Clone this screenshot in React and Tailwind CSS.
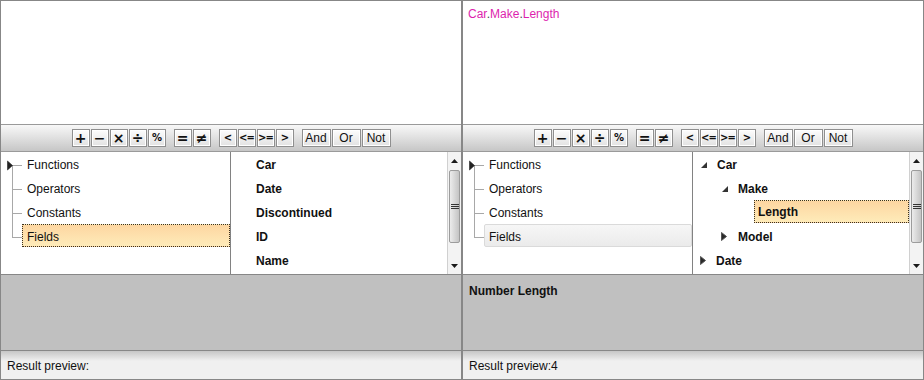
import React from 'react'

const FONT = { fontFamily: '"Liberation Sans", Arial, sans-serif' }
const SYM = { fontFamily: '"DejaVu Sans", sans-serif' }

function ToolButton({ children, wide, small }) {
  let size = 'w-[18px] text-[14px] font-bold'
  if (small) size = 'w-[18px] text-[10px] font-bold tracking-[-1px]'
  if (wide) size = 'w-[29px] text-[12px] font-normal'
  return (
    <div
      className={`h-[18px] ${size} flex items-center justify-center border border-[#8f8f8f] bg-gradient-to-b from-[#fdfdfd] to-[#e2e2e2] shadow-[inset_0_0_0_1px_#ffffff] text-[#111] leading-none`}
      style={wide ? FONT : SYM}
    >
      {children}
    </div>
  )
}

function Toolbar() {
  return (
    <div className="h-[28px] border-y border-[#9a9a9a] bg-[linear-gradient(to_bottom,#f8f8f8,#e2e2e2_45%,#c6c6c6)] flex items-center justify-center gap-2">
      <div className="flex gap-px">
        <ToolButton>+</ToolButton>
        <ToolButton>−</ToolButton>
        <ToolButton>×</ToolButton>
        <ToolButton>÷</ToolButton>
        <ToolButton small>%</ToolButton>
      </div>
      <div className="flex gap-px">
        <ToolButton>=</ToolButton>
        <ToolButton>≠</ToolButton>
      </div>
      <div className="flex gap-px">
        <ToolButton small>{'<'}</ToolButton>
        <ToolButton small>{'<='}</ToolButton>
        <ToolButton small>{'>='}</ToolButton>
        <ToolButton small>{'>'}</ToolButton>
      </div>
      <div className="flex gap-px">
        <ToolButton wide>And</ToolButton>
        <ToolButton wide>Or</ToolButton>
        <ToolButton wide>Not</ToolButton>
      </div>
    </div>
  )
}

// tree connector: kind = first | mid | last
function Connector({ kind, arrow }) {
  return (
    <svg width="21" height="24" className="shrink-0">
      {kind === 'first' && <line x1="11.5" y1="13" x2="11.5" y2="24" stroke="#a8a8a8" />}
      {kind === 'mid' && <line x1="11.5" y1="0" x2="11.5" y2="24" stroke="#a8a8a8" />}
      {kind === 'last' && <line x1="11.5" y1="0" x2="11.5" y2="13.5" stroke="#a8a8a8" />}
      <line x1="11" y1="13.5" x2="21" y2="13.5" stroke="#a8a8a8" />
      {arrow && <path d="M6.5 9 L11.5 13.5 L6.5 18 Z" fill="#222" stroke="#222" strokeWidth="0.6" />}
    </svg>
  )
}

function CategoryTree({ focused }) {
  const items = ['Functions', 'Operators', 'Constants', 'Fields']
  return (
    <div className="w-[230px] border-r border-[#828282] flex flex-col">
      {items.map((name, i) => {
        const kind = i === 0 ? 'first' : i === items.length - 1 ? 'last' : 'mid'
        const sel = name === 'Fields'
        return (
          <div key={name} className="h-[24px] flex items-start">
            <Connector kind={kind} arrow={i === 0} />
            <div
              className={`flex-1 h-[23px] flex items-center pl-[4px] pt-[2px] ${
                sel
                  ? focused
                    ? 'border border-dotted border-[#3a3020] bg-gradient-to-b from-[#fdd6a1] to-[#feebb9]'
                    : 'border border-[#dadada] rounded-[2px] bg-gradient-to-b from-[#f6f6f6] to-[#ebebeb]'
                  : 'border border-transparent'
              }`}
            >
              {name}
            </div>
          </div>
        )
      })}
    </div>
  )
}

function ScrollBar() {
  return (
    <div className="w-[14px] flex flex-col border-l border-[#d0d0d0] bg-[#f3f3f3]">
      <div className="h-[18px] flex items-center justify-center">
        <svg width="7" height="4"><path d="M0 4 L3.5 0 L7 4 Z" fill="#1a1a1a" /></svg>
      </div>
      <div className="h-[73px] mx-px rounded-[2px] border border-[#9c9c9c] bg-gradient-to-r from-[#ececec] via-[#d8d8d8] to-[#c4c4c4] flex items-center justify-center">
        <svg width="8" height="5">
          <line x1="0" y1="0.5" x2="8" y2="0.5" stroke="#333" />
          <line x1="0" y1="2.5" x2="8" y2="2.5" stroke="#333" />
          <line x1="0" y1="4.5" x2="8" y2="4.5" stroke="#333" />
        </svg>
      </div>
      <div className="flex-1" />
      <div className="h-[16px] flex items-center justify-center">
        <svg width="7" height="4"><path d="M0 0 L3.5 4 L7 0 Z" fill="#1a1a1a" /></svg>
      </div>
    </div>
  )
}

function FieldList() {
  const fields = ['Car', 'Date', 'Discontinued', 'ID', 'Name']
  return (
    <div className="flex-1 flex min-w-0">
      <div className="flex-1 flex flex-col font-bold">
        {fields.map((f) => (
          <div key={f} className="h-[24px] flex items-center pl-[25px] pt-px">{f}</div>
        ))}
      </div>
      <ScrollBar />
    </div>
  )
}

function Expanded() {
  return (
    <svg width="6" height="6" className="shrink-0">
      <path d="M6 0 L6 6 L0 6 Z" fill="#333" />
    </svg>
  )
}

function Collapsed() {
  return (
    <svg width="6" height="9" className="shrink-0">
      <path d="M0.5 0.5 L5.5 4.5 L0.5 8.5 Z" fill="#2a2a2a" stroke="#555" />
    </svg>
  )
}

function FieldTree() {
  return (
    <div className="flex-1 flex min-w-0">
      <div className="flex-1 flex flex-col font-bold">
        <div className="h-[24px] flex items-center pl-[8px] pt-px">
          <Expanded />
          <span className="ml-[10px]">Car</span>
        </div>
        <div className="h-[24px] flex items-center pl-[29px] pt-px">
          <Expanded />
          <span className="ml-[10px]">Make</span>
        </div>
        <div className="h-[24px] flex items-start pl-[61px]">
          <div className="flex-1 h-[23px] flex items-center pl-[3px] pt-px border border-dotted border-[#3a3020] bg-gradient-to-b from-[#fdd6a1] to-[#feebb9]">
            Length
          </div>
        </div>
        <div className="h-[24px] flex items-center pl-[28px] pt-px">
          <Collapsed />
          <span className="ml-[11px]">Model</span>
        </div>
        <div className="h-[24px] flex items-center pl-[7px] pt-px">
          <Collapsed />
          <span className="ml-[10px]">Date</span>
        </div>
      </div>
      <ScrollBar />
    </div>
  )
}

function Pane({ right }) {
  return (
    <div className="w-[462px] h-[380px] border border-[#878787] flex flex-col text-[12px] text-[#111]" style={FONT}>
      <div className="h-[123px] bg-white px-[5px] pt-[4px]">
        {right && (
          <span className="text-[#dd1fae]">
            Car<span className="text-[#444]">.</span>Make<span className="text-[#444]">.</span>Length
          </span>
        )}
      </div>
      <Toolbar />
      <div className="h-[123px] border-b border-[#878787] bg-white flex">
        <CategoryTree focused={!right} />
        {right ? <FieldTree /> : <FieldList />}
      </div>
      <div className="h-[75px] bg-[#c0c0c0] px-[6px] pt-[7px] font-bold">
        {right && 'Number Length'}
      </div>
      <div className="h-[29px] border-t border-[#878787] bg-[linear-gradient(to_bottom,#c6c6c6,#f0f0f0_10px)] flex items-center px-[6px] pt-[2px]">
        {right ? 'Result preview:4' : 'Result preview:'}
      </div>
    </div>
  )
}

export default function App() {
  return (
    <div className="w-[924px] h-[380px] flex bg-white">
      <Pane />
      <Pane right />
    </div>
  )
}
